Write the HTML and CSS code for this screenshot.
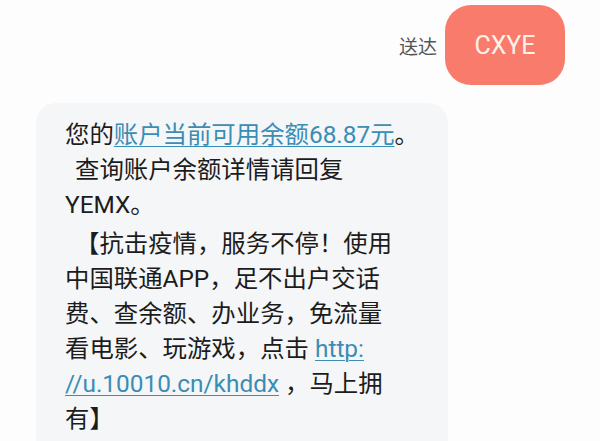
FILE: index.html
```html
<!DOCTYPE html>
<html lang="zh-CN">
<head>
    <meta charset="UTF-8">
    <meta name="viewport" content="width=device-width, initial-scale=1.0">
    <title>短信</title>
    <link rel="stylesheet" href="styles.css">
</head>
<body>

    <div class="chat">
        <!-- Sent message -->
        <div class="row-sent">
            <span class="status">送达</span>
            <div class="bubble-sent">CXYE</div>
        </div>

        <!-- Received message -->
        <div class="bubble-recv">
            <p class="line">您的<a href="#" class="link">账户当前可用余额68.87元</a>。</p>
            <p class="line"><span class="indent"></span>查询账户余额详情请回复</p>
            <p class="line">YEMX。</p>
            <p class="line gap"><span class="indent"></span>【抗击疫情，服务不停！使用</p>
            <p class="line">中国联通APP，足不出户交话</p>
            <p class="line">费、查余额、办业务，免流量</p>
            <p class="line">看电影、玩游戏，点击 <a href="#" class="link">http:</a></p>
            <p class="line"><a href="#" class="link">//u.10010.cn/khddx</a> ，马上拥</p>
            <p class="line">有】</p>
        </div>
    </div>

</body>
</html>
```

FILE: styles.css
```css
body {
    margin: 0;
    background-color: #fdfdfd;
    font-family: Roboto, "Noto Sans CJK SC", sans-serif;
    color: #1c1c1c;
    overflow: hidden;
}

.chat {
    display: flex;
    flex-direction: column;
    height: 441px;
}

.row-sent {
    display: flex;
    justify-content: flex-end;
    align-items: center;
    gap: 8px;
    padding: 5px 35px 0 0;
}

.status {
    font-family: "Noto Sans CJK SC", sans-serif;
    font-size: 19px;
    color: #555;
}

.bubble-sent {
    width: 120px;
    height: 80px;
    border-radius: 26px;
    background-color: #f97b6b;
    color: #fff0ea;
    font-size: 25px;
    display: flex;
    align-items: center;
    justify-content: center;
}

.bubble-recv {
    margin: 18px 0 0 36px;
    width: 412px;
    flex: 1;
    box-sizing: border-box;
    padding: 14px 0 0 29px;
    background-color: #f5f6f8;
    border-radius: 20px 20px 0 0;
    font-size: 24.4px;
}

.line {
    margin: 0;
    line-height: 35px;
    white-space: nowrap;
}

.gap {
    margin-top: 4px;
}

.indent {
    display: inline-block;
    width: 10px;
}

.link {
    color: #3a8db5;
    text-decoration: underline;
    text-decoration-thickness: 1px;
    text-underline-offset: 3px;
}
```
